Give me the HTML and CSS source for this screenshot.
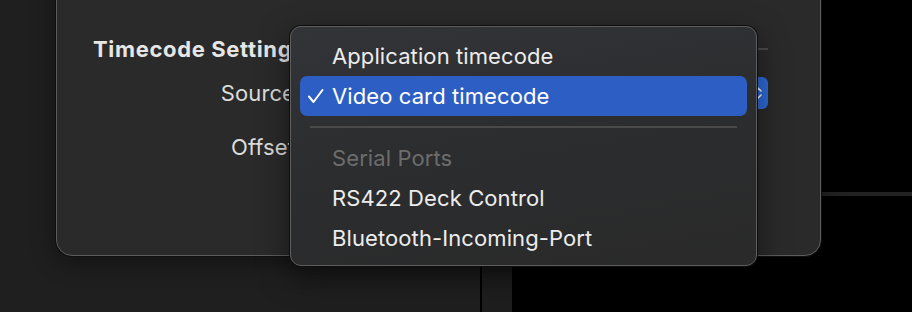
FILE: index.html
```html
<!DOCTYPE html>
<html lang="en">
<head>
    <meta charset="UTF-8">
    <title>Timecode Settings</title>
    <link rel="stylesheet" href="styles.css">
</head>
<body>
    <div class="backdrop">
        <div class="sidebar"></div>
        <div class="split"></div>
        <div class="pane"></div>
        <div class="viewer"><div class="viewer-rule"></div></div>
    </div>

    <div class="sheet">
        <div class="section-head">
            <h2>Timecode Settings</h2>
            <div class="rule"></div>
        </div>
        <div class="form-row">
            <span class="label">Source</span>
            <div class="popup">
                <svg class="chevrons" width="10" height="18" viewBox="0 0 10 18">
                    <polyline points="2,7 5,4 8,7" fill="none" stroke="#fff" stroke-width="1.6" stroke-linecap="round" stroke-linejoin="round"/>
                    <polyline points="2,11 5,14 8,11" fill="none" stroke="#fff" stroke-width="1.6" stroke-linecap="round" stroke-linejoin="round"/>
                </svg>
            </div>
        </div>
        <div class="form-row offset-row">
            <span class="label">Offset</span>
        </div>
    </div>

    <div class="menu">
        <div class="menu-item">Application timecode</div>
        <div class="menu-item selected">
            <svg class="check" width="18" height="16" viewBox="0 0 18 16">
                <polyline points="2,8.5 6.5,14 15.5,2" fill="none" stroke="#fff" stroke-width="2" stroke-linecap="round" stroke-linejoin="round"/>
            </svg>
            Video card timecode
        </div>
        <div class="menu-sep"></div>
        <div class="menu-item disabled">Serial Ports</div>
        <div class="menu-item">RS422 Deck Control</div>
        <div class="menu-item">Bluetooth-Incoming-Port</div>
    </div>
</body>
</html>
```

FILE: styles.css
```css
* {
    margin: 0;
    padding: 0;
    box-sizing: border-box;
}

body {
    width: 912px;
    height: 312px;
    overflow: hidden;
    position: relative;
    background: #000;
    font-family: 'Inter', 'Noto Sans', sans-serif;
    color: #e4e4e4;
}

.backdrop {
    display: flex;
    height: 312px;
}

.sidebar {
    width: 480px;
    background: #1f1f1f;
}

.split {
    width: 2px;
    background: #000;
}

.pane {
    width: 30px;
    background: #1e1e1e;
}

.viewer {
    flex: 1;
    background: #000;
    padding-top: 192px;
}

.viewer-rule {
    height: 4px;
    background: #222;
}

.sheet {
    position: absolute;
    left: 56px;
    top: -40px;
    width: 765px;
    height: 296px;
    background: #2a2a2a;
    border: 1px solid #5c5c5c;
    border-radius: 16px;
    box-shadow: 0 0 0 1px #101010, 0 6px 24px rgba(0, 0, 0, 0.45);
    padding: 70px 52px 0 36px;
}

.section-head {
    display: flex;
    align-items: center;
    height: 36px;
}

.section-head h2 {
    font-size: 22px;
    font-weight: 700;
    color: #e6e6e6;
    letter-spacing: 0.65px;
}

.rule {
    flex: 1;
    height: 2px;
    background: #4a4a4a;
    margin-left: 12px;
}

.form-row {
    display: flex;
    align-items: center;
    height: 32px;
    margin-top: 10px;
}

.label {
    width: 202px;
    flex-shrink: 0;
    text-align: right;
    font-size: 22px;
    letter-spacing: 0.1px;
    color: #dcdcdc;
}

.popup {
    flex: 1;
    height: 32px;
    margin-left: 8px;
    background: #2e6bd9;
    border-radius: 6px;
    display: flex;
    justify-content: flex-end;
    align-items: center;
    padding-right: 5px;
}

.offset-row {
    margin-top: 22px;
}

.menu {
    position: absolute;
    left: 290px;
    top: 26px;
    width: 467px;
    height: 240px;
    padding: 9px 9px 0 9px;
    background: linear-gradient(170deg, #323438 0%, #2c2d2f 45%, #2a2a2a 100%);
    border: 1px solid #5e5e5e;
    border-radius: 11px;
    box-shadow: 0 0 0 1px #0e0e0e, 0 10px 30px rgba(0, 0, 0, 0.5);
}

.menu-item {
    position: relative;
    height: 40px;
    display: flex;
    align-items: center;
    padding-left: 32px;
    font-size: 22px;
    letter-spacing: 0.1px;
    color: #ededed;
    border-radius: 7px;
}

.menu-item.selected {
    background: #2d5ec4;
    color: #fff;
}

.menu-item.disabled {
    color: #6c6c6c;
}

.check {
    position: absolute;
    left: 7px;
    top: 12px;
}

.menu-sep {
    height: 2px;
    margin: 10px 10px 10px 10px;
    background: #4a4a4a;
}
```
